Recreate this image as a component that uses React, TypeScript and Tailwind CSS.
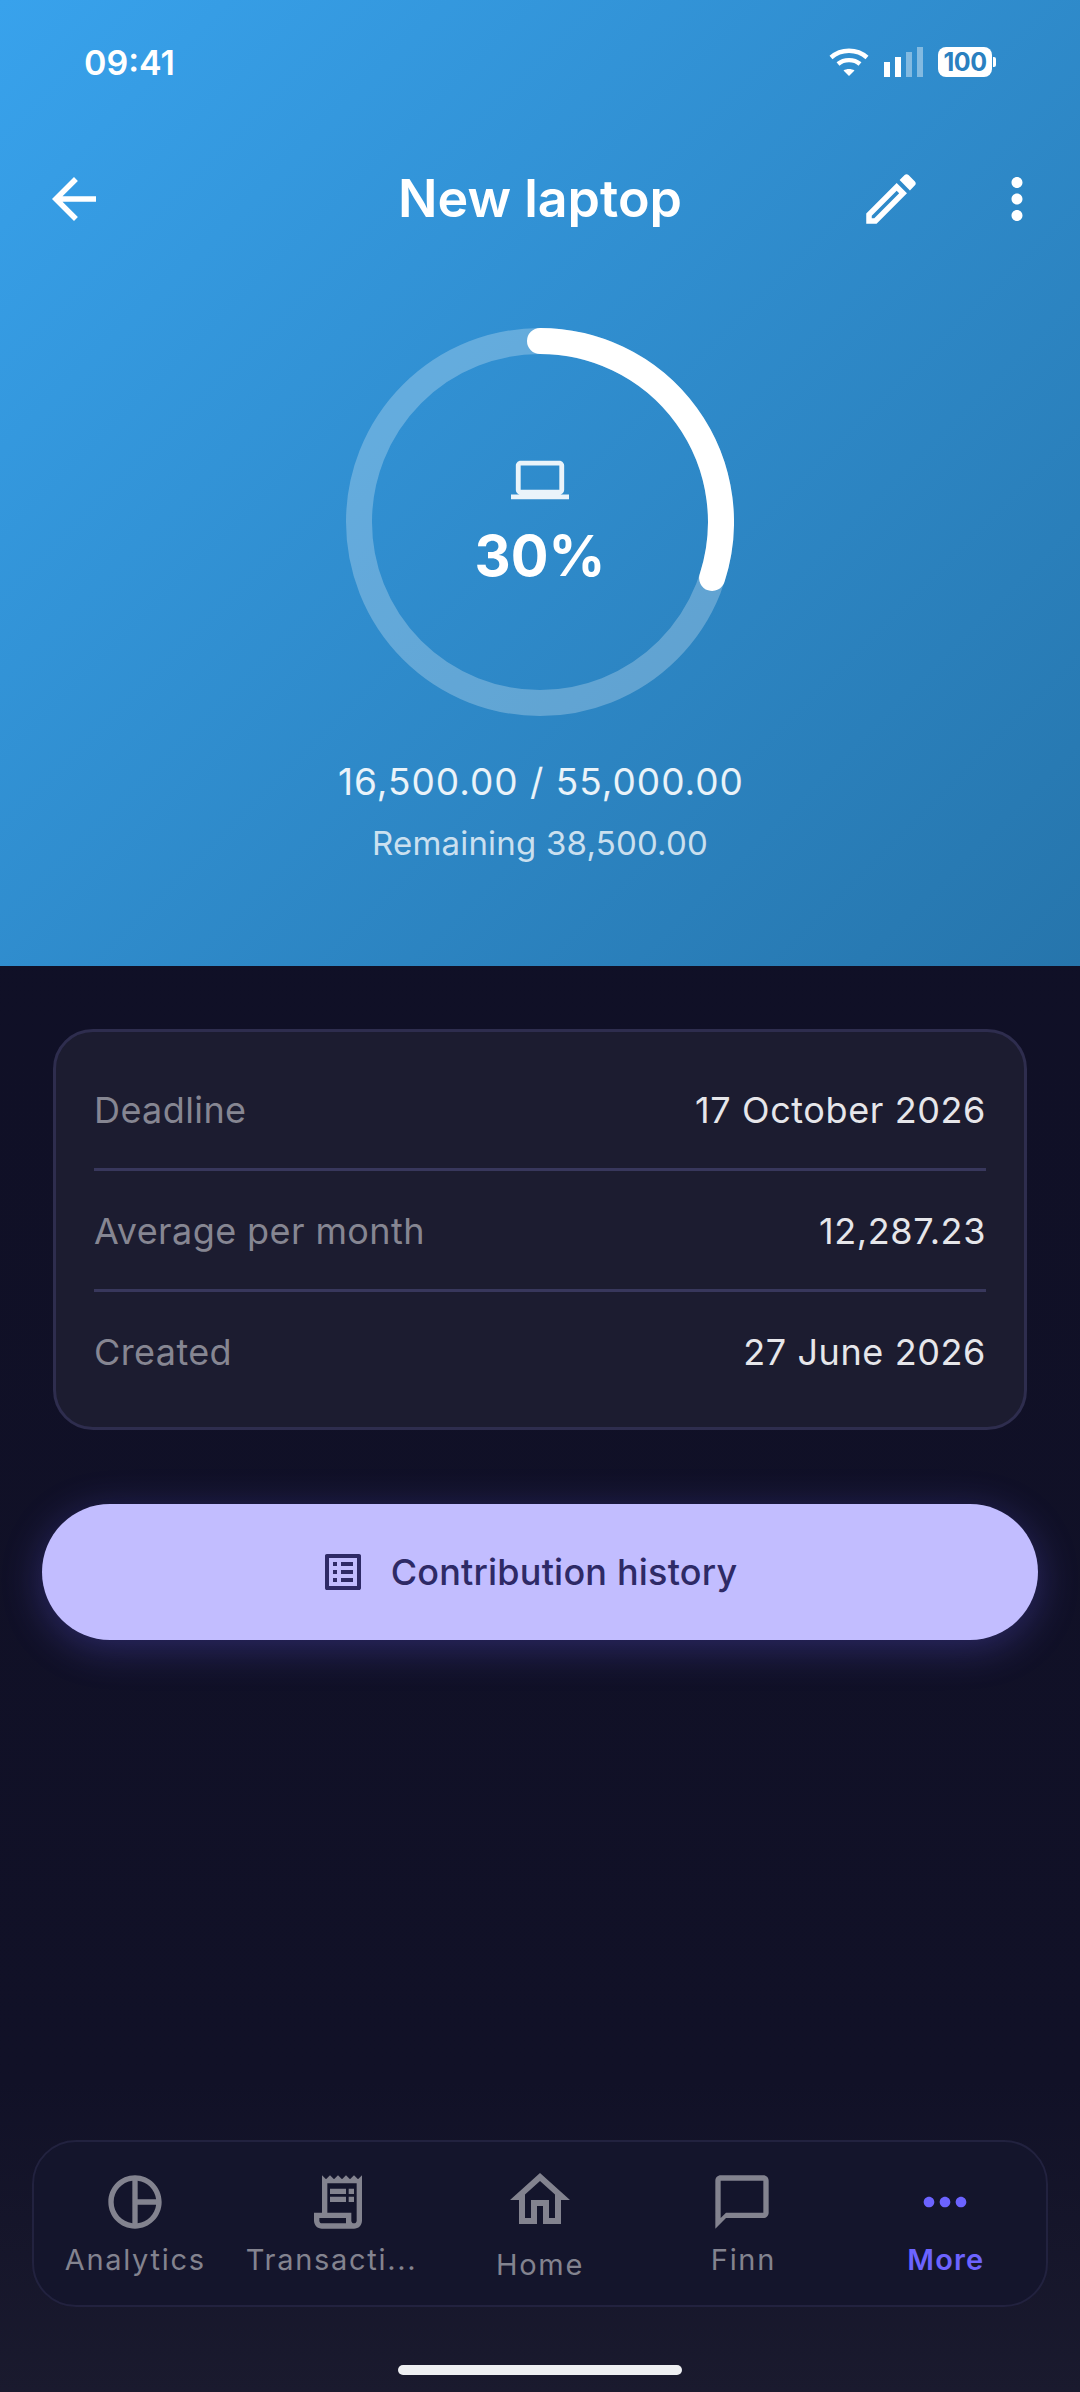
import React from 'react';

const Icon = ({ d, size, className }: { d: string; size: number; className?: string }) => (
  <svg width={size} height={size} viewBox="0 0 24 24" fill="currentColor" className={className}>
    <path d={d} fillRule="evenodd" />
  </svg>
);

const icons = {
  back: 'M20 11H7.83l5.59-5.59L12 4l-8 8 8 8 1.41-1.41L7.83 13H20v-2z',
  edit: 'M3 17.25V21h3.75L17.81 9.94l-3.75-3.75L3 17.25zM5.92 19H5v-.92l9.06-9.06.92.92L5.92 19zM20.71 5.63l-2.34-2.34c-.2-.2-.45-.29-.71-.29s-.51.1-.7.29l-1.83 1.83 3.75 3.75 1.83-1.83c.39-.39.39-1.02 0-1.41z',
  moreVert: 'M12 8c1.1 0 2-.9 2-2s-.9-2-2-2-2 .9-2 2 .9 2 2 2zm0 2c-1.1 0-2 .9-2 2s.9 2 2 2 2-.9 2-2-.9-2-2-2zm0 6c-1.1 0-2 .9-2 2s.9 2 2 2 2-.9 2-2-.9-2-2-2z',
  laptop: 'M20 18c1.1 0 2-.9 2-2V6c0-1.1-.9-2-2-2H4c-1.1 0-2 .9-2 2v10c0 1.1.9 2 2 2H0v2h24v-2h-4zM4 6h16v10H4V6z',
  list: 'M19 5v14H5V5h14m1.1-2H3.9c-.5 0-.9.4-.9.9v16.2c0 .4.4.9.9.9h16.2c.4 0 .9-.5.9-.9V3.9c0-.5-.5-.9-.9-.9zM11 7h6v2h-6V7zm0 4h6v2h-6v-2zm0 4h6v2h-6v-2zM7 7h2v2H7V7zm0 4h2v2H7v-2zm0 4h2v2H7v-2z',
  pie: 'M12 2C6.5 2 2 6.5 2 12s4.5 10 10 10 10-4.5 10-10S17.5 2 12 2zm1 2.07c3.61.45 6.48 3.33 6.93 6.93H13V4.07zM4 12c0-4.06 3.07-7.44 7-7.93v15.87c-3.93-.5-7-3.88-7-7.94zm9 7.93V13h6.93c-.45 3.61-3.32 6.48-6.93 6.93z',
  receipt: 'M19.5 3.5 18 2l-1.5 1.5L15 2l-1.5 1.5L12 2l-1.5 1.5L9 2 7.5 3.5 6 2v14H3v3c0 1.66 1.34 3 3 3h12c1.66 0 3-1.34 3-3V2l-1.5 1.5zM15 20H6c-.55 0-1-.45-1-1v-1h10v2zm4-1c0 .55-.45 1-1 1s-1-.45-1-1v-3H8V5h11v14zM9 7h6v2H9V7zm7 0h2v2h-2V7zM9 10h6v2H9v-2zm7 0h2v2h-2v-2z',
  home: 'M12 5.69l5 4.5V18h-2v-6H9v6H7v-7.81l5-4.5M12 3L2 12h3v8h6v-6h2v6h6v-8h3L12 3z',
  chat: 'M20 2H4c-1.1 0-2 .9-2 2v18l4-4h14c1.1 0 2-.9 2-2V4c0-1.1-.9-2-2-2zm0 14H6l-2 2V4h16v12z',
  moreHoriz: 'M6 10c-1.1 0-2 .9-2 2s.9 2 2 2 2-.9 2-2-.9-2-2-2zm12 0c-1.1 0-2 .9-2 2s.9 2 2 2 2-.9 2-2-.9-2-2-2zm-6 0c-1.1 0-2 .9-2 2s.9 2 2 2 2-.9 2-2-.9-2-2-2z',
};

const StatusBar = () => (
  <div className="h-[124px] flex items-center justify-between pl-[84px] pr-[84px] text-white">
    <span className="text-[34px] font-semibold tracking-[0px]">09:41</span>
    <div className="flex items-center">
      {/* wifi */}
      <svg width="40" height="28" viewBox="0 0 40 28" fill="none" stroke="white" strokeWidth="4.4">
        <path d="M2 9.5C12 0.5 28 0.5 38 9.5" />
        <path d="M9 16C15 10.8 25 10.8 31 16" />
        <path d="M20 28L14.500 22.500C17.500 20.500 22.500 20.500 25.500 22.500Z" fill="white" stroke="none" />
      </svg>
      {/* signal */}
      <div className="ml-[15px] flex items-end gap-[5px] h-[30px]">
        <div className="w-[6px] h-[15px] bg-white" />
        <div className="w-[6px] h-[20px] bg-white" />
        <div className="w-[6px] h-[25px] bg-white/40" />
        <div className="w-[6px] h-[30px] bg-white/40" />
      </div>
      {/* battery */}
      <div className="ml-[15px] w-[54px] h-[30px] rounded-[8px] bg-white flex items-center justify-center text-[25px] font-bold leading-none tracking-[-0.5px] text-[#2a80c0]">
        100
      </div>
      <div className="ml-[1px] w-[3px] h-[10px] rounded-r-[2px] bg-white" />
    </div>
  </div>
);

const Ring = () => (
  <div className="relative mt-[54px] mx-auto w-[388px] h-[388px]">
    <svg width="388" height="388" viewBox="0 0 388 388" fill="none" strokeWidth="26">
      <circle cx="194" cy="194" r="181" stroke="white" strokeOpacity="0.25" />
      <path d="M194 13A181 181 0 0 1 366.100 250" stroke="white" strokeLinecap="round" />
    </svg>
    <div className="absolute inset-0 flex flex-col items-center text-white">
      <Icon d={icons.laptop} size={58} className="mt-[123px] text-white/90" />
      <span className="mt-[14px] text-[56px] leading-[66px] font-bold">30%</span>
    </div>
  </div>
);

const Row = ({ label, value }: { label: string; value: string }) => (
  <div className="h-[118px] pt-[2px] flex items-center justify-between text-[36px] tracking-[0.4px]">
    <span className="text-[#868692]">{label}</span>
    <span className="text-[#e6e6ea] tracking-[0.6px]">{value}</span>
  </div>
);

const navItems = [
  { label: 'Analytics', d: icons.pie, size: 64, wrap: 'pt-[28px]', gap: 'mt-[8px]' },
  { label: 'Transacti...', d: icons.receipt, size: 64, wrap: 'pt-[28px]', gap: 'mt-[8px] mr-[12px]' },
  { label: 'Home', d: icons.home, size: 72, wrap: 'pt-[22px]', gap: 'mt-[11px]' },
  { label: 'Finn', d: icons.chat, size: 64, wrap: 'pt-[28px]', gap: 'mt-[8px] ml-[2px]' },
];

export default function App() {
  return (
    <div className="relative w-[1080px] h-[2392px] flex flex-col overflow-hidden bg-[linear-gradient(180deg,#0f0f26_0%,#111127_87%,#1a1a2e_100%)] font-['Inter',sans-serif]">
      {/* Hero */}
      <div className="h-[966px] shrink-0 bg-[linear-gradient(135deg,#38a2ec_0%,#2675ac_100%)]">
        <StatusBar />

        <div className="h-[150px] grid grid-cols-[1fr_auto_1fr] items-center px-[30px] text-white">
          <Icon d={icons.back} size={66} className="ml-[11px]" />
          <h1 className="text-[52px] font-semibold">New laptop</h1>
          <div className="flex justify-end gap-[60px]">
            <Icon d={icons.edit} size={66} />
            <Icon d={icons.moreVert} size={66} />
          </div>
        </div>

        <Ring />

        <p className="mt-[40px] text-center text-[37px] leading-[52px] tracking-[1px] pl-[2px] text-white/90">
          16,500.00 / 55,000.00
        </p>
        <p className="mt-[11px] text-center text-[33px] leading-[48px] tracking-[0.2px] text-white/75">Remaining 38,500.00</p>
      </div>

      {/* Details */}
      <div className="mt-[63px] mx-[53px] rounded-[40px] border-[3px] border-[#2e2d4e] bg-[#1c1c30] px-[38px] pt-[18px] pb-[17px]">
        <Row label="Deadline" value="17 October 2026" />
        <div className="h-[3px] bg-[#38375c]" />
        <Row label="Average per month" value="12,287.23" />
        <div className="h-[3px] bg-[#38375c]" />
        <Row label="Created" value="27 June 2026" />
      </div>

      <button className="mt-[74px] mx-[42px] h-[136px] shrink-0 rounded-[68px] bg-[#c2bdff] shadow-[0_8px_40px_rgba(108,99,255,0.3)] flex items-center justify-center gap-[24px] pr-[24px] text-[36px] font-medium tracking-[0.2px] text-[#2e2a66]">
        <Icon d={icons.list} size={48} />
        Contribution history
      </button>

      {/* Bottom nav */}
      <nav className="mt-auto mx-[32px] h-[167px] rounded-[44px] border-2 border-[#22223f] bg-[#14152c] flex">
        {navItems.map((item) => (
          <div key={item.label} className={`flex-1 min-w-0 flex flex-col items-center text-[#83838f] ${item.wrap}`}>
            <Icon d={item.d} size={item.size} />
            <span className={`whitespace-nowrap text-[29px] leading-[36px] tracking-[1.7px] ${item.gap}`}>
              {item.label}
            </span>
          </div>
        ))}
        <div className="flex-1 min-w-0 flex flex-col items-center pt-[28px] text-[#6c63ff]">
          <Icon d={icons.moreHoriz} size={64} />
          <span className="mt-[8px] ml-[2px] text-[29px] leading-[36px] tracking-[1.2px] font-semibold">More</span>
        </div>
      </nav>

      <div className="mt-[58px] mb-[17px] mx-auto w-[284px] h-[10px] rounded-full bg-[#eeeff2]" />
    </div>
  );
}
